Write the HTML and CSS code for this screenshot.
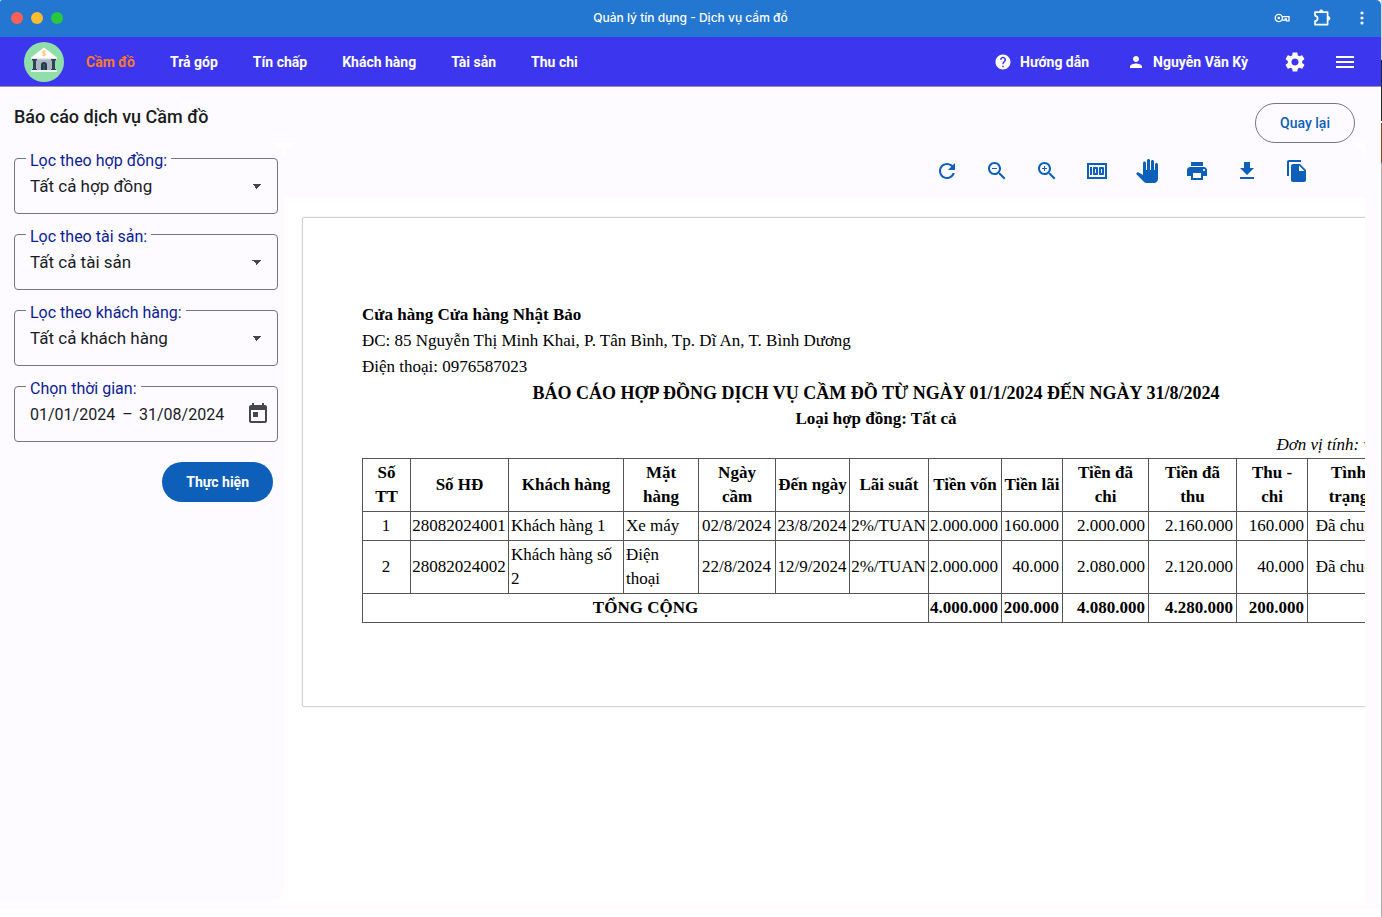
FILE: index.html
```html
<!DOCTYPE html>
<html lang="vi">
<head>
<meta charset="utf-8">
<meta name="viewport" content="width=device-width, initial-scale=1">
<title>Quản lý tín dụng - Dịch vụ cầm đồ</title>
<link rel="stylesheet" href="styles.css">
</head>
<body>
<div class="app">
  <header class="titlebar">
    <div class="traffic">
      <span class="dot dot-red"></span><span class="dot dot-yellow"></span><span class="dot dot-green"></span>
    </div>
    <div class="window-title">Quản lý tín dụng - Dịch vụ cầm đồ</div>
    <div class="window-tools">
      <button class="plain" type="button" aria-label="Mật khẩu">
        <svg width="16" height="16" viewBox="0 0 16 16" fill="none" stroke="currentColor" stroke-width="1.3"><circle cx="4.8" cy="8" r="3.6"/><circle cx="4.8" cy="8" r="1.3" fill="currentColor" stroke="none"/><path d="M8.3 6.6H15v4.2h-2.6V9h-1.2v1.2H8"/></svg>
      </button>
      <button class="plain" type="button" aria-label="Tiện ích">
        <svg width="20" height="20" viewBox="0 0 20 20" fill="none" stroke="currentColor" stroke-width="1.7" stroke-linejoin="round"><path d="M3 4.2H15.6V16.6H3V13.2C4.8 12.8 5.6 11.8 5.6 10.4S4.8 8 3 7.6Z"/><path d="M7.6 3.6a1.7 1.7 0 0 1 3.4 0ZM16.2 8.6a1.7 1.7 0 0 1 0 3.4Z" fill="currentColor" stroke-width="1"/></svg>
      </button>
      <button class="plain" type="button" aria-label="Thêm">
        <svg width="16" height="16" viewBox="0 0 16 16" fill="currentColor"><circle cx="8" cy="3" r="1.6"/><circle cx="8" cy="8" r="1.6"/><circle cx="8" cy="13" r="1.6"/></svg>
      </button>
    </div>
  </header>

  <nav class="navbar">
    <a class="logo" href="#" aria-label="Trang chủ">
      <svg width="40" height="40" viewBox="0 0 40 40">
        <circle cx="20" cy="20" r="20" fill="#90dfaa"/>
        <path d="M11 17h18v11H11z" fill="#a9b5c1"/>
        <path d="M20 5.500 33 15.500v1.500h-26v-1.500z" fill="#fff"/>
        <path d="M7 16h26v1.500h-26z" fill="#dde5ea"/>
        <path d="M8 17h5v1.500h-1V27h1v1.500H8V27h1v-8.500H8zM27 17h5v1.500h-1V27h1v1.500h-5V27h1v-8.500h-1z" fill="#2d4456"/>
        <path d="M17 28.500V23a3 3 0 0 1 6 0v5.500z" fill="#243b4b"/>
        <path d="M20 22v6.500" stroke="#58798c" stroke-width=".8"/>
        <path d="M7 28h26v2H7z" fill="#eef2f4"/>
        <path d="M21.600 9.700c-.6-.6-3.200-.8-3.200.5 0 1.400 3.200.7 3.200 2.200 0 1.300-2.600 1.200-3.300.4M20 8.200v6.200" fill="none" stroke="#ffc247"/>
      </svg>
    </a>
    <div class="links">
      <a class="active" href="#">Cầm đồ</a>
      <a href="#">Trả góp</a>
      <a href="#">Tín chấp</a>
      <a href="#">Khách hàng</a>
      <a href="#">Tài sản</a>
      <a href="#">Thu chi</a>
    </div>
    <div class="account">
      <a class="with-icon" href="#">
        <svg width="18" height="18" viewBox="0 0 24 24" fill="currentColor"><path d="M12 2C6.480 2 2 6.480 2 12s4.480 10 10 10 10-4.480 10-10S17.520 2 12 2zm1 17h-2v-2h2v2zm2.070-7.750l-.9.920C13.450 12.900 13 13.500 13 15h-2v-.5c0-1.100.45-2.100 1.170-2.830l1.240-1.260c.37-.36.59-.86.59-1.410 0-1.100-.9-2-2-2s-2 .9-2 2H8c0-2.210 1.790-4 4-4s4 1.790 4 4c0 .88-.36 1.680-.93 2.250z"/></svg>
        Hướng dẫn
      </a>
      <a class="with-icon" href="#">
        <svg width="18" height="18" viewBox="0 0 24 24" fill="currentColor"><path d="M12 12c2.210 0 4-1.790 4-4s-1.790-4-4-4-4 1.790-4 4 1.790 4 4 4zm0 2c-2.670 0-8 1.340-8 4v2h16v-2c0-2.660-5.330-4-8-4z"/></svg>
        Nguyễn Văn Kỳ
      </a>
    </div>
    <div class="nav-tools">
      <button class="plain" type="button" aria-label="Cài đặt">
        <svg width="24" height="24" viewBox="0 0 24 24" fill="currentColor"><path d="M19.140 12.940c.04-.3.060-.61.060-.94 0-.32-.02-.64-.07-.94l2.030-1.580c.18-.14.23-.41.120-.61l-1.920-3.320c-.12-.22-.37-.29-.59-.22l-2.390.96c-.5-.38-1.030-.7-1.620-.94l-.36-2.540c-.04-.24-.24-.41-.48-.41h-3.840c-.24 0-.43.170-.47.410l-.36 2.540c-.59.240-1.130.570-1.620.940l-2.390-.96c-.22-.08-.47 0-.59.220L2.740 8.870c-.12.210-.08.470.120.610l2.030 1.580c-.05.3-.09.630-.09.940s.02.640.07.940l-2.030 1.580c-.18.140-.23.410-.12.610l1.920 3.320c.12.220.37.290.59.220l2.390-.96c.5.380 1.030.7 1.620.940l.36 2.540c.05.240.24.410.48.410h3.840c.24 0 .44-.17.470-.41l.36-2.540c.59-.24 1.130-.56 1.620-.94l2.390.96c.22.080.47 0 .59-.22l1.920-3.320c.12-.22.070-.47-.12-.61l-2.010-1.580zM12 15.600c-1.980 0-3.600-1.620-3.600-3.600s1.620-3.600 3.600-3.600 3.600 1.620 3.600 3.600-1.620 3.600-3.600 3.600z"/></svg>
      </button>
      <button class="plain" type="button" aria-label="Trình đơn">
        <svg width="24" height="24" viewBox="0 0 24 24" fill="currentColor"><path d="M3 18h18v-2H3v2zm0-5h18v-2H3v2zm0-7v2h18V6H3z"/></svg>
      </button>
    </div>
  </nav>

  <div class="page-head">
    <h1>Báo cáo dịch vụ Cầm đồ</h1>
    <button class="btn btn-outline" type="button">Quay lại</button>
  </div>

  <main class="workspace">
    <form class="filters">
      <div class="field">
        <label for="contract">Lọc theo hợp đồng:</label>
        <select id="contract"><option>Tất cả hợp đồng</option></select>
      </div>
      <div class="field">
        <label for="asset">Lọc theo tài sản:</label>
        <select id="asset"><option>Tất cả tài sản</option></select>
      </div>
      <div class="field">
        <label for="customer">Lọc theo khách hàng:</label>
        <select id="customer"><option>Tất cả khách hàng</option></select>
      </div>
      <div class="field dates">
        <label for="from">Chọn thời gian:</label>
        <input id="from" type="text" value="01/01/2024">
        <span>–</span>
        <input type="text" value="31/08/2024" aria-label="Đến ngày">
        <button class="plain" type="button" aria-label="Mở lịch">
          <svg width="24" height="24" viewBox="0 0 24 24" fill="currentColor"><path d="M19 3h-1V1h-2v2H8V1H6v2H5c-1.110 0-1.990.9-1.990 2L3 19c0 1.100.89 2 2 2h14c1.100 0 2-.9 2-2V5c0-1.100-.9-2-2-2zm0 16H5V8h14v11zM7 10h5v5H7z"/></svg>
        </button>
      </div>
      <button class="btn btn-primary" type="submit">Thực hiện</button>
    </form>

    <section class="viewer">
      <div class="toolbar">
        <button class="plain" type="button" aria-label="Tải lại"><svg width="24" height="24" viewBox="0 0 24 24" fill="currentColor"><path d="M17.650 6.350C16.200 4.900 14.210 4 12 4c-4.420 0-7.990 3.580-7.990 8s3.570 8 7.990 8c3.730 0 6.840-2.550 7.730-6h-2.080c-.82 2.330-3.040 4-5.650 4-3.310 0-6-2.690-6-6s2.690-6 6-6c1.660 0 3.140.69 4.220 1.780L13 11h7V4l-2.350 2.350z"/></svg></button>
        <button class="plain" type="button" aria-label="Thu nhỏ"><svg width="24" height="24" viewBox="0 0 24 24" fill="currentColor"><path d="M15.500 14h-.79l-.28-.27C15.410 12.590 16 11.110 16 9.500 16 5.910 13.090 3 9.500 3S3 5.910 3 9.500 5.910 16 9.500 16c1.610 0 3.090-.59 4.230-1.570l.27.28v.79l5 4.990L20.490 19l-4.990-5zm-6 0C7.010 14 5 11.990 5 9.500S7.010 5 9.500 5 14 7.010 14 9.500 11.990 14 9.500 14zM7 9h5v1H7z"/></svg></button>
        <button class="plain" type="button" aria-label="Phóng to"><svg width="24" height="24" viewBox="0 0 24 24" fill="currentColor"><path d="M15.500 14h-.79l-.28-.27C15.410 12.590 16 11.110 16 9.500 16 5.910 13.090 3 9.500 3S3 5.910 3 9.500 5.910 16 9.500 16c1.610 0 3.090-.59 4.230-1.570l.27.28v.79l5 4.990L20.490 19l-4.990-5zm-6 0C7.010 14 5 11.990 5 9.500S7.010 5 9.500 5 14 7.010 14 9.500 11.990 14 9.500 14zM12 10h-2v2H9v-2H7V9h2V7h1v2h2v1z"/></svg></button>
        <button class="plain" type="button" aria-label="Kích thước thật"><svg width="24" height="24" viewBox="0 0 24 24" fill="currentColor"><path d="M5 8h2v8H5zm7 0H9c-.55 0-1 .45-1 1v6c0 .55.450 1 1 1h3c.55 0 1-.45 1-1V9c0-.55-.45-1-1-1zm-1 6h-1v-4h1v4zm7-6h-3c-.55 0-1 .45-1 1v6c0 .55.450 1 1 1h3c.55 0 1-.45 1-1V9c0-.55-.45-1-1-1zm-1 6h-1v-4h1v4zM2 4v16h20V4H2zm2 14V6h16v12H4z"/></svg></button>
        <button class="plain" type="button" aria-label="Kéo trang"><svg width="24" height="24" viewBox="0 0 24 24" fill="currentColor"><path d="M23 5.500V20c0 2.200-1.800 4-4 4h-7.300c-1.080 0-2.100-.43-2.850-1.190L1 14.830s1.260-1.230 1.300-1.250c.22-.19.490-.29.790-.29.220 0 .42.060.6.160.04.010 4.310 2.460 4.310 2.460V4c0-.83.670-1.500 1.500-1.500S11 3.170 11 4v7h1V1.500c0-.83.670-1.500 1.500-1.500S15 .67 15 1.500V11h1V2.500c0-.83.670-1.500 1.500-1.500s1.500.67 1.500 1.500V11h1V5.500c0-.83.670-1.500 1.500-1.500s1.500.67 1.500 1.500z"/></svg></button>
        <button class="plain" type="button" aria-label="In"><svg width="24" height="24" viewBox="0 0 24 24" fill="currentColor"><path d="M19 8H5c-1.660 0-3 1.340-3 3v6h4v4h12v-4h4v-6c0-1.660-1.340-3-3-3zm-3 11H8v-5h8v5zm3-7c-.55 0-1-.45-1-1s.45-1 1-1 1 .45 1 1-.45 1-1 1zm-1-9H6v4h12V3z"/></svg></button>
        <button class="plain" type="button" aria-label="Tải xuống"><svg width="24" height="24" viewBox="0 0 24 24" fill="currentColor"><path d="M19 9h-4V3H9v6H5l7 7 7-7zM5 18v2h14v-2H5z"/></svg></button>
        <button class="plain" type="button" aria-label="Sao chép"><svg width="24" height="24" viewBox="0 0 24 24" fill="currentColor"><path d="M16 1H4c-1.100 0-2 .9-2 2v14h2V3h12V1zm-1 4l6 6v10c0 1.100-.9 2-2 2H7.990C6.890 23 6 22.100 6 21l.01-14c0-1.100.89-2 1.990-2h7zm-1 7h5.500L14 6.500V12z"/></svg></button>
      </div>
      <div class="canvas">
        <article class="sheet">
          <p><b>Cửa hàng Cửa hàng Nhật Bảo</b></p>
          <p>ĐC: 85 Nguyễn Thị Minh Khai, P. Tân Bình, Tp. Dĩ An, T. Bình Dương</p>
          <p>Điện thoại: 0976587023</p>
          <h2>BÁO CÁO HỢP ĐỒNG DỊCH VỤ CẦM ĐỒ TỪ NGÀY 01/1/2024 ĐẾN NGÀY 31/8/2024</h2>
          <p class="center"><b>Loại hợp đồng: Tất cả</b></p>
          <p class="unit">Đơn vị tính: vnđ</p>
          <table>
            <colgroup>
              <col class="w48"><col class="w98"><col class="w115"><col class="w75"><col class="w77"><col class="w74"><col class="w79"><col class="w73"><col class="w61"><col class="w86"><col class="w88"><col class="w71"><col class="w82">
            </colgroup>
            <thead>
              <tr><th>Số<br>TT</th><th>Số HĐ</th><th>Khách hàng</th><th>Mặt<br>hàng</th><th>Ngày<br>cầm</th><th>Đến ngày</th><th>Lãi suất</th><th>Tiền vốn</th><th>Tiền lãi</th><th>Tiền đã<br>chi</th><th>Tiền đã<br>thu</th><th>Thu -<br>chi</th><th>Tình<br>trạng</th></tr>
            </thead>
            <tbody>
              <tr><td class="center">1</td><td class="center">28082024001</td><td>Khách hàng 1</td><td>Xe máy</td><td class="center">02/8/2024</td><td class="center">23/8/2024</td><td class="center">2%/TUAN</td><td class="num">2.000.000</td><td class="num">160.000</td><td class="num">2.000.000</td><td class="num">2.160.000</td><td class="num">160.000</td><td class="center">Đã chuộc</td></tr>
              <tr><td class="center">2</td><td class="center">28082024002</td><td>Khách hàng số<br>2</td><td>Điện<br>thoại</td><td class="center">22/8/2024</td><td class="center">12/9/2024</td><td class="center">2%/TUAN</td><td class="num">2.000.000</td><td class="num">40.000</td><td class="num">2.080.000</td><td class="num">2.120.000</td><td class="num">40.000</td><td class="center">Đã chuộc</td></tr>
            </tbody>
            <tfoot>
              <tr><th colspan="7">TỔNG CỘNG</th><td class="num">4.000.000</td><td class="num">200.000</td><td class="num">4.080.000</td><td class="num">4.280.000</td><td class="num">200.000</td><td></td></tr>
            </tfoot>
          </table>
        </article>
      </div>
    </section>
  </main>
</div>
</body>
</html>
```
FILE: styles.css
```css
:root {
  --surface: #fdfbff;
  --primary: #0d5fb9;
  --nav: #3c36ee;
  --outline: #74777f;
  --ink: #1a1b1f;
}

* { box-sizing: border-box; }

body {
  margin: 0;
  padding: 0 1px 8px 0;
  min-height: 100vh;
  display: flex;
  font-family: Roboto, "Noto Sans", sans-serif;
  font-size: 14px;
  color: var(--ink);
  background:
    linear-gradient(#d5dbe2 60px, #2a2a33 60px 121px, #ffffff 121px 123px, #8b4a20 123px 163px, #ababab 163px) right / 1px 100% no-repeat,
    #ffffff;
}

a { color: inherit; text-decoration: none; }
svg { display: block; flex: none; }
h1, h2, p { margin: 0; }

.plain {
  display: flex;
  align-items: center;
  justify-content: center;
  padding: 0;
  border: 0;
  background: none;
  color: inherit;
  cursor: pointer;
}

.app {
  flex: 1;
  min-width: 0;
  display: flex;
  flex-direction: column;
  background: var(--surface);
}

/* Window title bar */
.titlebar {
  display: grid;
  grid-template-columns: 1fr auto 1fr;
  align-items: center;
  height: 37px;
  padding: 0 11px 2px;
  background: #2377d0;
  color: #fff;
  border-radius: 2px 5px 0 0;
}
.traffic { display: flex; gap: 8px; }
.dot { width: 12px; height: 12px; border-radius: 50%; }
.dot-red { background: #ff5f57; }
.dot-yellow { background: #febc2e; }
.dot-green { background: #28c840; }
.window-title { font-family: Inter, "Noto Sans", sans-serif; font-size: 12px; font-weight: 500; }
.window-tools { display: flex; align-items: center; justify-content: flex-end; gap: 22px; }

/* Navigation */
.navbar {
  display: flex;
  align-items: center;
  height: 50px;
  padding: 0 24px;
  background: var(--nav);
  border-bottom: 1px solid #a08f9f;
  color: #fff;
  font-weight: 700;
}
.logo { margin-right: 22px; }
.links { display: flex; gap: 35px; }
.active { color: #fb7a2c; }
.account { display: flex; gap: 38px; margin-left: auto; }
.with-icon { display: flex; align-items: center; gap: 8px; }
.nav-tools { display: flex; gap: 26px; margin-left: 35px; }

/* Page heading */
.page-head {
  display: flex;
  align-items: flex-start;
  justify-content: space-between;
  padding: 16px 26px 0 14px;
}
.page-head h1 { font-size: 18px; font-weight: 500; line-height: 28px; }

.btn {
  height: 40px;
  padding: 0 24px;
  border: 0;
  border-radius: 20px;
  font: 500 14px Roboto, "Noto Sans", sans-serif;
  cursor: pointer;
}
.btn-outline { border: 1px solid var(--outline); background: transparent; color: var(--primary); }
.btn-primary { align-self: flex-end; margin-right: 5px; background: var(--primary); color: #fff; font-weight: 700; }

.workspace {
  flex: 1;
  display: grid;
  grid-template-columns: 284px minmax(0, 1fr);
  margin: 0 16px 5px 0;
  background: #fff;
}

/* Filters */
.filters {
  display: flex;
  flex-direction: column;
  gap: 20px;
  padding: 15px 6px 0 14px;
  background: var(--surface);
  border-radius: 0 16px 16px 0;
}
.field {
  position: relative;
  height: 56px;
  border: 1px solid var(--outline);
  border-radius: 4px;
}
.field label {
  position: absolute;
  left: 11px;
  top: -8px;
  padding: 0 4px;
  background: var(--surface);
  color: #0b1c95;
  font-size: 16px;
  line-height: 20px;
}
.field select {
  width: 100%;
  height: 54px;
  padding: 0 15px;
  border: 0;
  border-radius: 4px;
  appearance: none;
  background:
    linear-gradient(to bottom right, #44474e 50%, transparent 50%) right 15px center / 5px 5px no-repeat,
    linear-gradient(to bottom left, #44474e 50%, transparent 50%) right 20px center / 5px 5px no-repeat;
  color: var(--ink);
  font: 17px Roboto, "Noto Sans", sans-serif;
}
.dates { display: flex; align-items: center; padding: 0 7px 0 15px; font-size: 16px; }
.dates input {
  width: 86px;
  padding: 0;
  border: 0;
  background: none;
  color: var(--ink);
  font: 16px Roboto, "Noto Sans", sans-serif;
}
.dates span { width: 23px; text-align: center; }
.dates button { margin-left: auto; color: #44474e; }

/* Report viewer */
.viewer { display: flex; flex-direction: column; min-width: 0; }
.toolbar {
  display: flex;
  justify-content: flex-end;
  height: 55px;
  padding-right: 43px;
  background: var(--surface);
  border-radius: 16px 16px 0 0;
  color: var(--primary);
}
.toolbar button { width: 50px; }
.canvas { flex: 1; padding: 19px 0 0 18px; overflow: hidden; }

.sheet {
  width: 1148px;
  padding: 84px 59px 83px;
  border: 1px solid #d2d2d2;
  border-radius: 2px;
  box-shadow: 0 0 2px rgba(0, 0, 0, .12);
  color: #000;
  font-family: "Liberation Serif", "Times New Roman", serif;
  font-size: 17px;
  line-height: 26px;
}
.sheet h2 { font-size: 18px; line-height: 26px; text-align: center; }
.sheet .center { text-align: center; }
.sheet .unit { padding-right: 2px; text-align: right; font-style: italic; }

table {
  width: 100%;
  table-layout: fixed;
  border-collapse: collapse;
  line-height: 24px;
}
th, td { padding: 2px 1px; border: 1px solid #555; white-space: nowrap; }
td { text-align: left; padding-left: 2px; }
.sheet td.center { padding: 2px 1px 2px 0; }
td.num { padding-left: 0; padding-right: 3px; text-align: right; }
tfoot td { font-weight: 700; }

.w48 { width: 48px; }
.w61 { width: 61px; }
.w71 { width: 71px; }
.w73 { width: 73px; }
.w74 { width: 74px; }
.w75 { width: 75px; }
.w77 { width: 77px; }
.w79 { width: 79px; }
.w82 { width: 82px; }
.w86 { width: 86px; }
.w88 { width: 88px; }
.w98 { width: 98px; }
.w115 { width: 115px; }
```
